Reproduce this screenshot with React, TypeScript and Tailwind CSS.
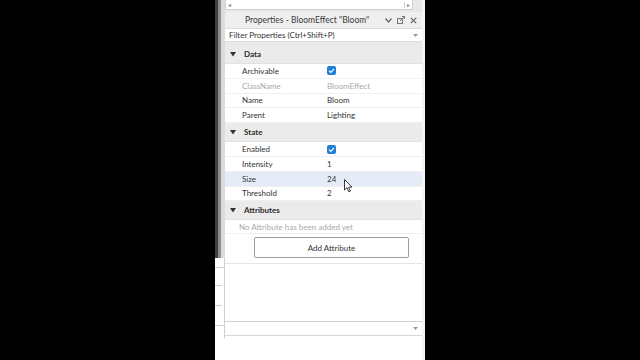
type Row = { name: string; value?: string; check?: boolean; disabled?: boolean; hover?: boolean };

const dataRows: Row[] = [
  { name: "Archivable", check: true },
  { name: "ClassName", value: "BloomEffect", disabled: true },
  { name: "Name", value: "Bloom" },
  { name: "Parent", value: "Lighting" },
];

const stateRows: Row[] = [
  { name: "Enabled", check: true },
  { name: "Intensity", value: "1" },
  { name: "Size", value: "24", hover: true },
  { name: "Threshold", value: "2" },
];

const Check = () => (
  <span className="w-[9px] h-[9px] rounded-[2px] bg-[#1f7fd6] flex items-center justify-center">
    <svg width="7" height="7" viewBox="0 0 10 10">
      <path d="M1.5 5.2 L4 7.6 L8.6 2.6" fill="none" stroke="#fff" strokeWidth="1.8" />
    </svg>
  </span>
);

const SectionHeader = ({ label }: { label: string }) => (
  <div className="h-[19px] bg-[#ebebeb] flex items-center border-b border-[#e2e2e2]">
    <svg className="ml-[5px] mr-[8px]" width="6" height="5" viewBox="0 0 6 5">
      <path d="M0 0 H6 L3 4.5 Z" fill="#333" />
    </svg>
    <span className="font-bold text-[#2b2b2b]">{label}</span>
  </div>
);

const PropRow = ({ row }: { row: Row }) => (
  <div
    className={
      "h-[14.8px] flex items-center border-b border-[#f0f0f0] " +
      (row.hover ? "bg-[#e6ecf7]" : "bg-white")
    }
  >
    <span className={"pl-[17px] w-[102px] " + (row.disabled ? "text-[#a8a8a8]" : "text-[#333]")}>
      {row.name}
    </span>
    {row.check ? (
      <Check />
    ) : (
      <span className={row.disabled ? "text-[#a8a8a8]" : "text-[#333]"}>{row.value}</span>
    )}
  </div>
);

const Cursor = () => (
  <svg className="absolute left-[344px] top-[179px]" width="9" height="14" viewBox="0 0 9 14">
    <path d="M0.5 0.5 V11 L3 8.6 L4.8 12.8 L6.4 12.1 L4.7 8.1 L8 8.1 Z" fill="#fff" stroke="#222" strokeWidth="0.9" />
  </svg>
);

export default function App() {
  return (
    <div className="relative w-[640px] h-[360px] bg-black flex font-['Lato',sans-serif] text-[8px] overflow-hidden">
      <div className="w-[215px]" />
      {/* edge of the neighbouring window */}
      <div className="w-[10px] flex flex-col">
        <div className="h-[258px] flex">
          <div className="w-[3px] bg-[#3a3f40]" />
          <div className="w-[3px] bg-[#8d8d8d]" />
          <div className="flex-1 bg-[#dcdcdc]" />
        </div>
        <div className="h-[80px] bg-white flex flex-col border-r border-[#cfcfcf]">
          <div className="h-[10px] border-b border-[#cfcfcf]" />
          <div className="h-[18px] border-b border-[#cfcfcf] w-[7px]" />
          <div className="h-[20px] border-b border-[#cfcfcf] w-[7px]" />
          <div className="h-[20px] border-b border-[#cfcfcf]" />
        </div>
        <div className="flex-1 bg-white" />
      </div>

      <div className="w-[200px] bg-white flex flex-col border-r-[3px] border-[#f4f4f4]">
        {/* scroll strip */}
        <div className="h-[10px] bg-[#e8e8e8] flex">
          <div className="flex-1 bg-white border-b border-x border-[#cfcfcf] flex items-center justify-between px-[2px] text-[#888] text-[6px] leading-none">
            <span>◂</span>
            <span className="border-l border-[#cfcfcf] pl-[2px]">▸</span>
          </div>
          <div className="w-[9px]" />
        </div>
        <div className="h-[2px] bg-[#e8e8e8]" />

        {/* title */}
        <div className="h-[16px] bg-[#efefef] flex items-center pl-[20px] pr-[5px]">
          <span className="text-[8.5px] text-[#3a3a3a] flex-1">Properties - BloomEffect "Bloom"</span>
          <svg width="7" height="5" viewBox="0 0 7 5" className="mr-[5px]">
            <path d="M0.5 0.5 L3.5 4 L6.5 0.5" fill="none" stroke="#666" strokeWidth="1.2" />
          </svg>
          <svg width="8" height="8" viewBox="0 0 8 8" className="mr-[5px]">
            <rect x="0.5" y="2.5" width="5" height="5" fill="none" stroke="#777" />
            <path d="M3 5 L7.5 0.5 M5 0.5 H7.5 V3" fill="none" stroke="#777" />
          </svg>
          <svg width="7" height="7" viewBox="0 0 7 7">
            <path d="M0.8 0.8 L6.2 6.2 M6.2 0.8 L0.8 6.2" stroke="#666" strokeWidth="1.2" />
          </svg>
        </div>

        {/* filter */}
        <div className="h-[14px] bg-white border-y border-[#dcdcdc] flex items-center pl-[4px] pr-[4px]">
          <span className="flex-1 text-[#333]">Filter Properties (Ctrl+Shift+P)</span>
          <svg width="5" height="3" viewBox="0 0 5 3">
            <path d="M0 0 H5 L2.5 3 Z" fill="#999" />
          </svg>
        </div>
        <div className="h-[3px] bg-[#e9e9e9]" />

        {/* body */}
        <div className="h-[277px] flex flex-col border-b border-[#d0d0d0]">
          <SectionHeader label="Data" />
          {dataRows.map((r) => (
            <PropRow key={r.name} row={r} />
          ))}
          <SectionHeader label="State" />
          {stateRows.map((r) => (
            <PropRow key={r.name} row={r} />
          ))}
          <SectionHeader label="Attributes" />
          <div className="border-b border-[#e6e6e6] pb-[5px]">
            <div className="h-[14px] flex items-center pl-[14px] text-[#a9a9a9] border-b border-[#f0f0f0]">
              No Attribute has been added yet
            </div>
            <div className="flex pl-[29px] pt-[3px]">
              <button className="w-[155px] h-[21px] border border-[#9e9e9e] rounded-[2px] bg-white text-[#333] text-[8px]">
                Add Attribute
              </button>
            </div>
          </div>
          <div className="flex-1" />
        </div>

        {/* bottom filter */}
        <div className="h-[14px] bg-white border-b border-[#d8d8d8] flex items-center justify-end pr-[4px]">
          <svg width="5" height="3" viewBox="0 0 5 3">
            <path d="M0 0 H5 L2.5 3 Z" fill="#999" />
          </svg>
        </div>
        <div className="flex-1 bg-white" />
      </div>
      <div className="flex-1" />
      <Cursor />
    </div>
  );
}
